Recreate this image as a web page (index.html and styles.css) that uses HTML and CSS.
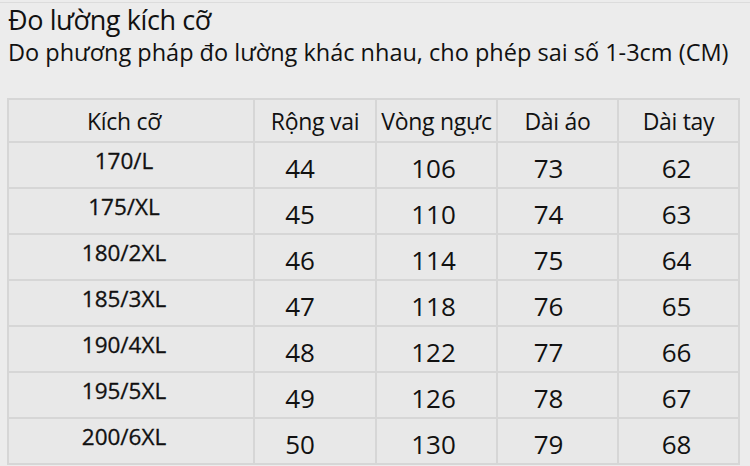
FILE: index.html
```html
<!DOCTYPE html>
<html lang="vi">
<head>
<meta charset="utf-8">
<title>Đo lường kích cỡ</title>
<link rel="stylesheet" href="styles.css">
</head>
<body>
<div class="page">
  <h1 class="title">Đo lường kích cỡ</h1>
  <p class="subtitle">Do phương pháp đo lường khác nhau, cho phép sai số 1-3cm (CM)</p>
  <table class="size-table">
    <colgroup>
      <col class="c1"><col class="c2"><col class="c3"><col class="c4"><col class="c5">
    </colgroup>
    <thead>
      <tr><th class="h1">Kích cỡ</th><th>Rộng vai</th><th>Vòng ngực</th><th>Dài áo</th><th>Dài tay</th></tr>
    </thead>
    <tbody>
      <tr><td class="sz">170/L</td><td class="n2">44</td><td class="n3">106</td><td class="n4">73</td><td class="n5">62</td></tr>
      <tr><td class="sz">175/XL</td><td class="n2">45</td><td class="n3">110</td><td class="n4">74</td><td class="n5">63</td></tr>
      <tr><td class="sz">180/2XL</td><td class="n2">46</td><td class="n3">114</td><td class="n4">75</td><td class="n5">64</td></tr>
      <tr><td class="sz">185/3XL</td><td class="n2">47</td><td class="n3">118</td><td class="n4">76</td><td class="n5">65</td></tr>
      <tr><td class="sz">190/4XL</td><td class="n2">48</td><td class="n3">122</td><td class="n4">77</td><td class="n5">66</td></tr>
      <tr><td class="sz">195/5XL</td><td class="n2">49</td><td class="n3">126</td><td class="n4">78</td><td class="n5">67</td></tr>
      <tr><td class="sz">200/6XL</td><td class="n2">50</td><td class="n3">130</td><td class="n4">79</td><td class="n5">68</td></tr>
    </tbody>
  </table>
</div>
</body>
</html>
```
FILE: styles.css
```css
html, body {
  margin: 0;
  padding: 0;
  background: #ececec;
  color: #111;
  font-family: "Open Sans", "Noto Sans", sans-serif;
}
.page {
  width: 750px;
  height: 466px;
  overflow: hidden;
  border-top: 1px solid #dcdcdc;
  margin-top: 2px;
  box-sizing: border-box;
}
.title {
  margin: 0;
  padding: 0 0 0 8px;
  font-weight: 400;
  font-size: 27px;
  line-height: 34px;
  letter-spacing: -0.4px;
}
.subtitle {
  margin: 0;
  padding: 0 0 0 8px;
  font-size: 23.5px;
  line-height: 30px;
  letter-spacing: 0;
}
.size-table {
  margin: 31px 0 0 7px;
  border-collapse: collapse;
  table-layout: fixed;
  width: 731px;
  background: #e8e8e8;
}
.c1 { width: 246px; }
.c2 { width: 122px; }
.c3 { width: 121px; }
.c4 { width: 121px; }
.c5 { width: 121px; }
.size-table th, .size-table td {
  border: 2px solid #d6d6d6;
  text-align: center;
  padding: 0;
  white-space: nowrap;
  line-height: 30px;
}
.size-table th {
  height: 41px;
  font-weight: 400;
  font-size: 23px;
  letter-spacing: -0.3px;
}
.size-table th.h1 { padding-right: 14px; }
.size-table td {
  height: 36px;
  font-size: 26px;
}
.size-table td.sz {
  font-size: 22.5px;
  font-weight: 500;
  -webkit-text-stroke: 0.3px #111;
  padding: 0 14px 8px 0;
}
.size-table td.n2 { padding: 6px 30px 0 0; }
.size-table td.n3 { padding: 6px 6px 0 0; }
.size-table td.n4 { padding: 6px 18px 0 0; }
.size-table td.n5 { padding: 6px 4px 0 0; }
```
